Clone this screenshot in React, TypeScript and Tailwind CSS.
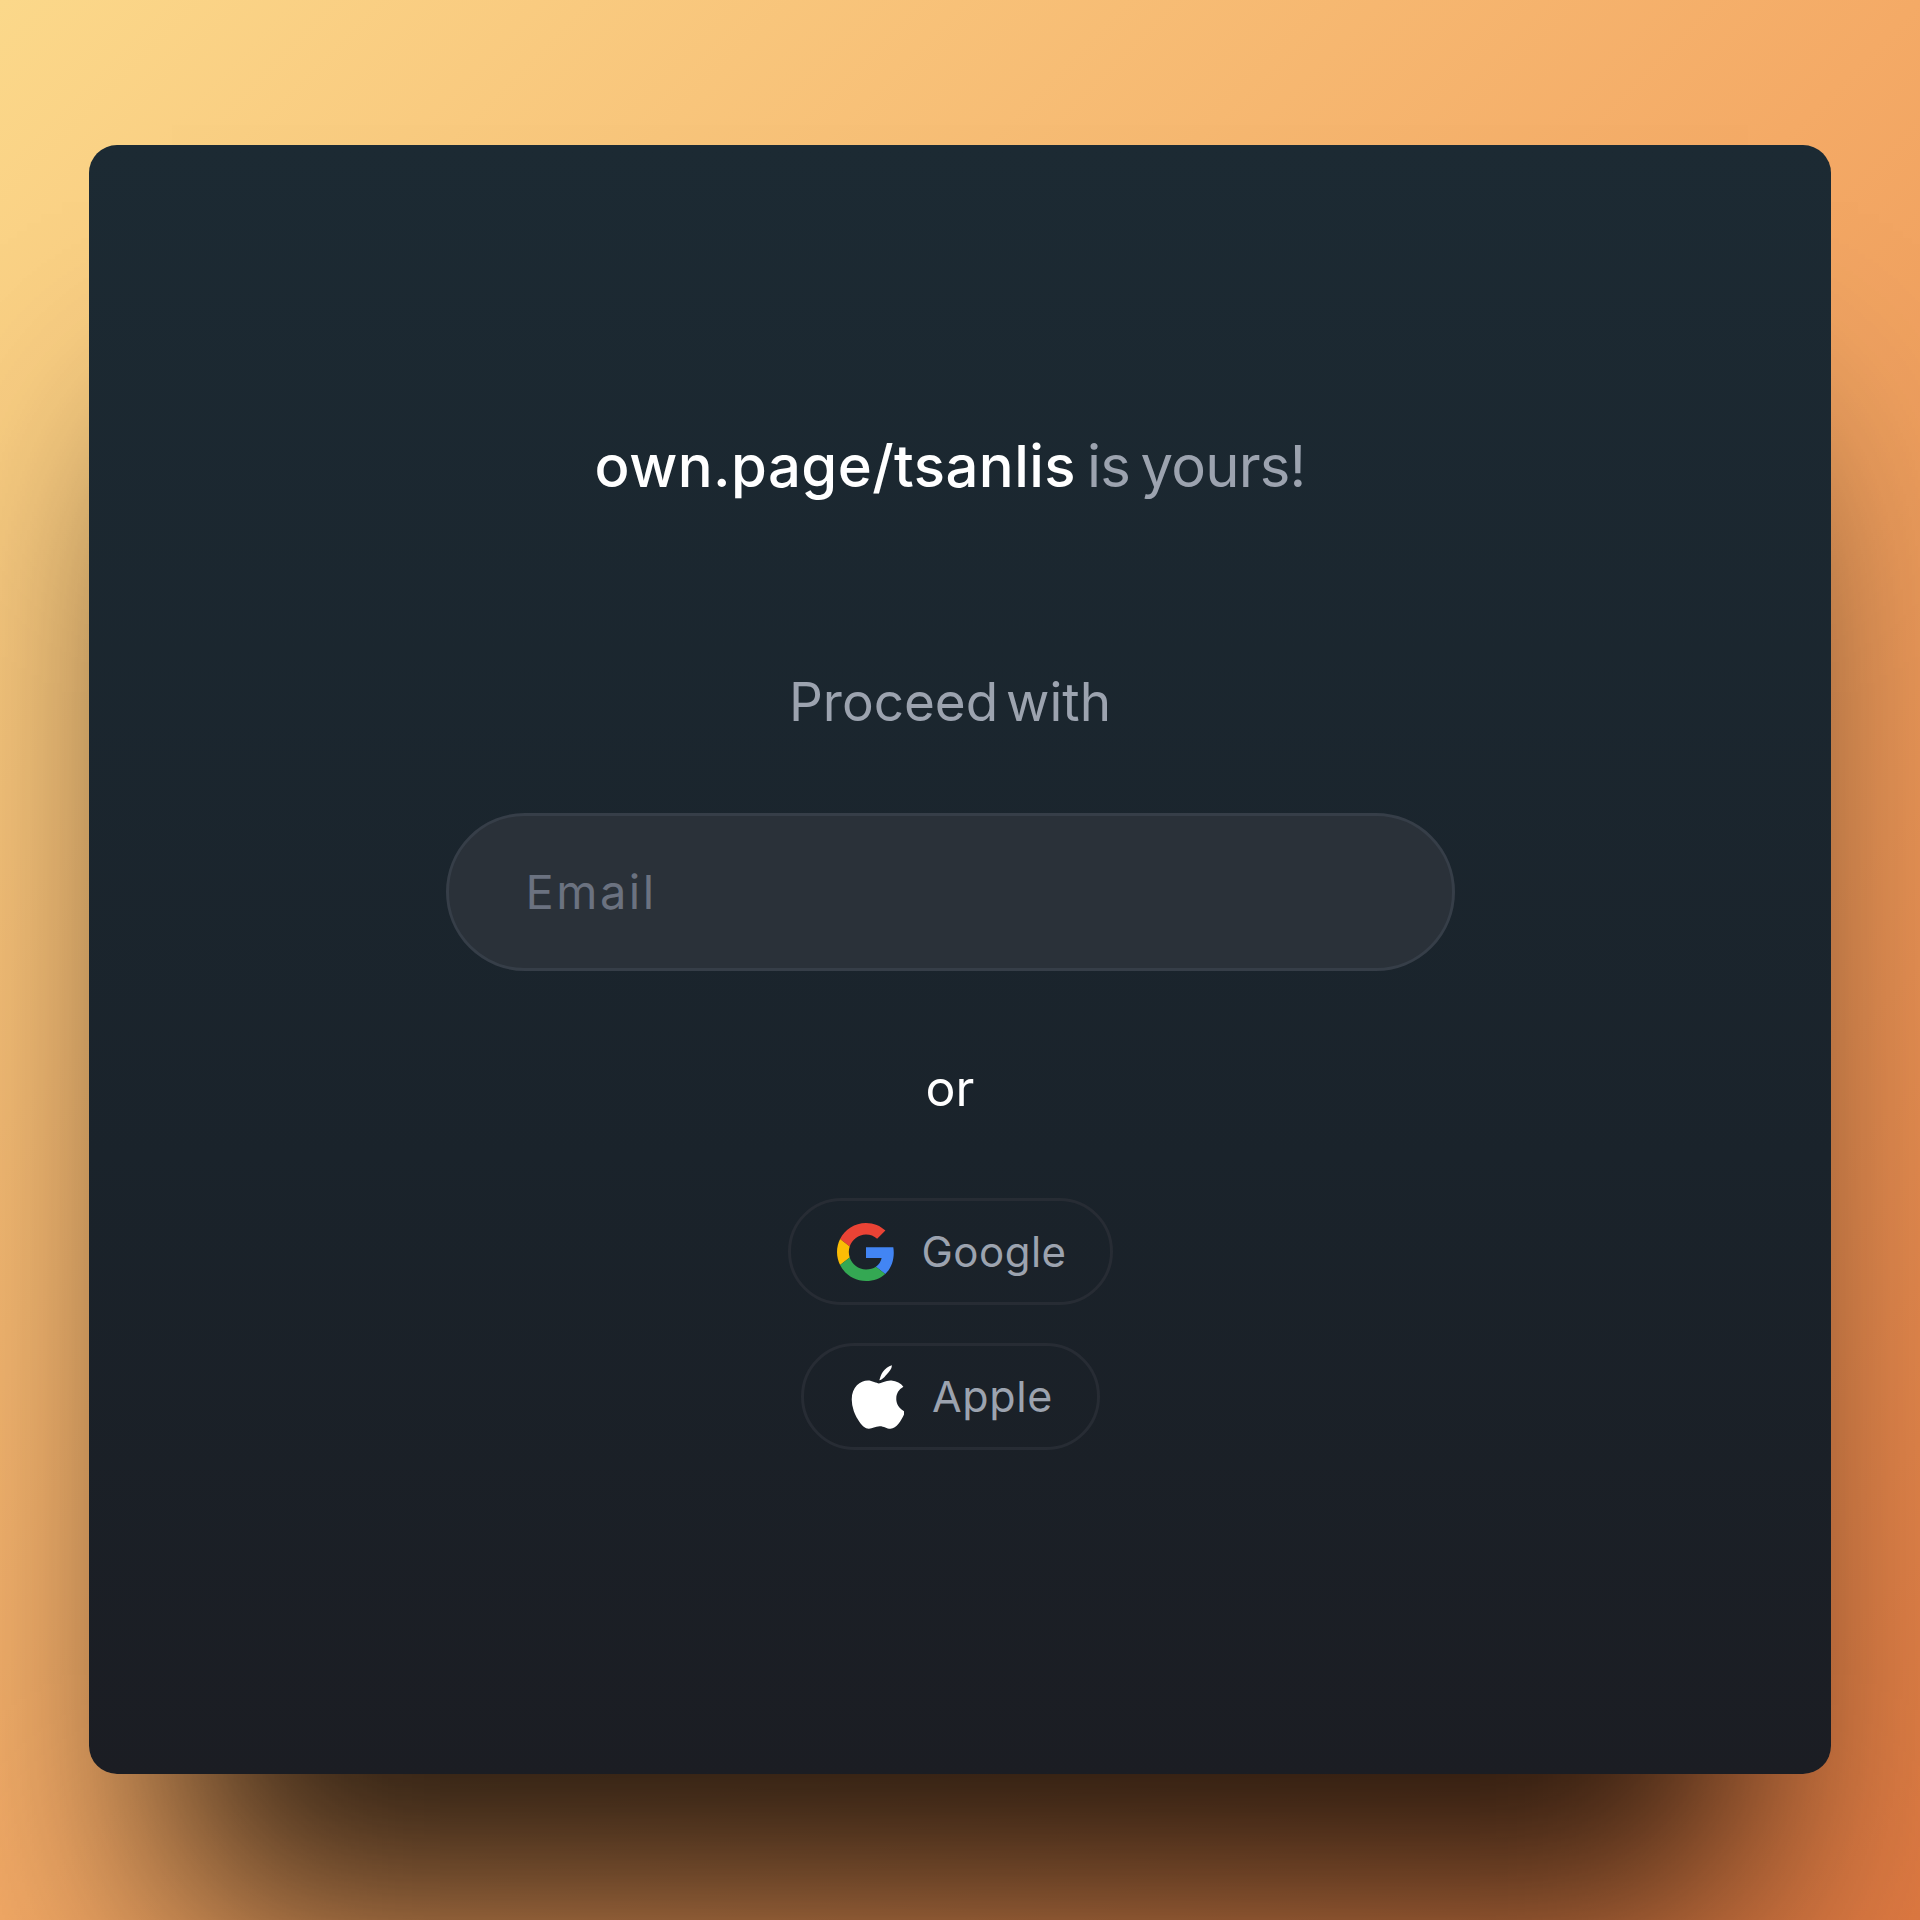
import React from "react";

const font = { fontFamily: "Inter, 'Open Sans', sans-serif" };

function GoogleIcon() {
  return (
    <svg viewBox="0 0 48 48" className="w-[58px] h-[58px] shrink-0">
      <path fill="#EA4335" d="M24 9.5c3.54 0 6.71 1.22 9.21 3.6l6.85-6.85C35.9 2.38 30.47 0 24 0 14.62 0 6.51 5.38 2.56 13.22l7.98 6.19C12.43 13.72 17.74 9.5 24 9.5z" />
      <path fill="#4285F4" d="M46.98 24.55c0-1.57-.15-3.09-.38-4.55H24v9.02h12.94c-.58 2.96-2.26 5.48-4.78 7.18l7.73 6c4.51-4.18 7.09-10.36 7.09-17.65z" />
      <path fill="#FBBC05" d="M10.53 28.59c-.48-1.45-.76-2.99-.76-4.59s.27-3.14.76-4.59l-7.98-6.19C.92 16.46 0 20.12 0 24c0 3.88.92 7.54 2.56 10.78l7.97-6.19z" />
      <path fill="#34A853" d="M24 48c6.48 0 11.93-2.13 15.89-5.81l-7.73-6c-2.15 1.45-4.92 2.3-8.16 2.3-6.26 0-11.57-4.22-13.47-9.91l-7.98 6.19C6.51 42.62 14.62 48 24 48z" />
    </svg>
  );
}

function AppleIcon() {
  return (
    <svg viewBox="0 30 372 452" className="w-[53px] h-[64px] shrink-0" fill="#ffffff">
      <path d="M318.7 268.7c-.2-36.7 16.4-64.4 50-84.8-18.8-26.9-47.2-41.7-84.7-44.6-35.5-2.8-74.3 20.7-88.5 20.7-15 0-49.4-19.7-76.4-19.7C63.3 141.2 4 184.8 4 273.5q0 39.3 14.4 81.2c12.8 36.7 59 126.7 107.2 125.2 25.2-.6 43-17.9 75.8-17.9 31.8 0 48.3 17.9 76.4 17.9 48.6-.7 90.4-82.5 102.6-119.3-65.2-30.7-61.7-90-61.7-91.9z" />
      <path d="M244 104c26-26 43-46 44-72-25 8-49 25-65 48-11 17-17 36-24 58 17-4 32-18 45-34z" />
    </svg>
  );
}

export default function App() {
  return (
    <div
      className="w-[1920px] h-[1920px] overflow-hidden pt-[145px] pl-[89px] bg-[linear-gradient(135deg,#fbd88a_0%,#f4aa66_50%,#e07a42_100%)]"
      style={font}
    >
      <div className="w-[1742px] h-[1629px] pr-[20px] rounded-[28px] bg-[linear-gradient(180deg,#1c2a33_0%,#1a232b_62%,#1b1d23_100%)] shadow-[0_224px_220px_-84px_rgba(0,0,0,0.85)] flex flex-col items-center pt-[290px]">
        <h1 className="h-[62px] text-[58px] leading-[62px] font-medium text-white whitespace-nowrap tracking-[0.45px] [word-spacing:-5px]">
          own.page/tsanlis <span className="font-normal text-[#9ca3af] tracking-[-0.8px]">is yours!</span>
        </h1>
        <p className="mt-[178px] h-[54px] text-[53px] leading-[54px] text-[#9ca3af] whitespace-nowrap [word-spacing:-7px]">Proceed with</p>
        <div className="mt-[84px] w-[1009px] h-[158px] rounded-full border-[3px] border-[#363e48] bg-[#2a3139] flex items-center pl-[77px]">
          <span className="text-[47px] tracking-[2.5px] text-[#6b7280]">Email</span>
        </div>
        <p className="mt-[91px] h-[52px] text-[50px] leading-[52px] text-white">or</p>
        <button className="mt-[84px] pl-[4px] w-[325px] h-[107px] rounded-full border-[3px] border-[#272c34] flex items-center justify-center gap-[26px]">
          <GoogleIcon />
          <span className="text-[42px] tracking-[0.5px] text-[#9ca3af]">Google</span>
        </button>
        <button className="mt-[38px] pl-[4px] w-[299px] h-[107px] rounded-full border-[3px] border-[#272c34] flex items-center justify-center gap-[28px]">
          <AppleIcon />
          <span className="text-[43px] tracking-[0.6px] text-[#9ca3af]">Apple</span>
        </button>
      </div>
    </div>
  );
}
